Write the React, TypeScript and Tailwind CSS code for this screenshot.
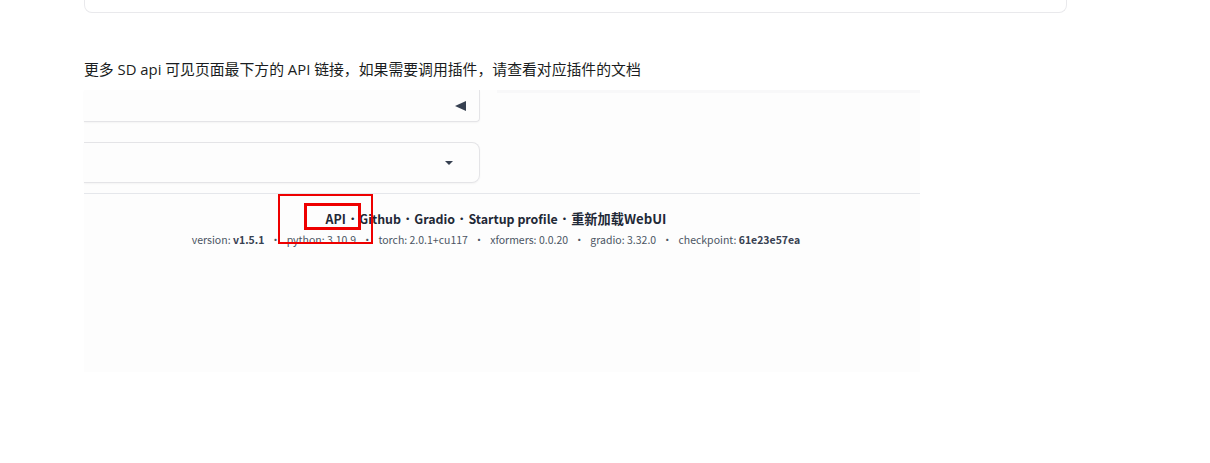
export default function App() {
  const links = ["API", "Github", "Gradio", "Startup profile"];

  return (
    <div className="relative h-[463px] w-[1210px] overflow-hidden bg-white pl-[84px]">
      {/* Top card */}
      <div className="h-[13px] w-[983px] rounded-b-lg border-x border-b border-[#e9e9ec]" />

      <p className="mt-[46px] h-[21px] text-[14.85px] leading-[21px] text-[#1a1d21] [font-family:'Open_Sans','Noto_Sans_CJK_SC',sans-serif]">
        更多 SD api 可见页面最下方的 API 链接，如果需要调用插件，请查看对应插件的文档
      </p>

      {/* Embedded screenshot */}
      <div className="mt-[10px] h-[282px] w-[836px] bg-[#fdfdfd] [font-family:'Noto_Sans_CJK_SC',sans-serif]">
        <div className="flex items-start">
          <div className="flex h-[32px] w-[396px] items-center justify-end rounded-br-sm border-r border-b border-[#e4e4e7] pr-[13px] shadow-[0_1px_2px_rgba(0,0,0,0.04)]">
            <span className="h-0 w-0 border-y-[5px] border-r-[11px] border-y-transparent border-r-[#374151]" />
          </div>
          <div className="ml-[17px] h-[3px] flex-1 bg-[#f8f8f9]" />
        </div>

        <div className="mt-[20px] flex h-[41px] w-[396px] items-center justify-end rounded-r-lg border-y border-r border-[#e4e4e7] pr-[26px] shadow-[0_1px_2px_rgba(0,0,0,0.04)]">
          <span className="h-0 w-0 border-x-[4px] border-t-[4px] border-x-transparent border-t-[#374151]" />
        </div>

        <div className="mt-[10px] border-t border-[#e5e7eb] pt-[16px] pr-[12px] text-center">
          <div className="flex items-center justify-center text-[12.4px] leading-[18px] font-semibold text-[#1f2937]">
            {links.map((link, i) => (
              <span key={link}>
                {i > 0 && <span className="mx-[0.5px] font-normal">·</span>}
                {link}
              </span>
            ))}
            <span>
              <span className="mx-[0.5px] font-normal">·</span>
              <span className="text-[13.2px]">重新加载WebUI</span>
            </span>
          </div>
          <div className="mt-[4px] flex items-center justify-center gap-[4.5px] text-[10.5px] leading-[16px] text-[#4b5563]">
            <span>
              version: <b className="font-semibold text-[#374151]">v1.5.1</b>
            </span>
            <span className="mx-[1.4px]">•</span>
            <span>python: 3.10.9</span>
            <span className="mx-[1.4px]">•</span>
            <span>torch: 2.0.1+cu117</span>
            <span className="mx-[1.4px]">•</span>
            <span>xformers: 0.0.20</span>
            <span className="mx-[1.4px]">•</span>
            <span>gradio: 3.32.0</span>
            <span className="mx-[1.4px]">•</span>
            <span>
              checkpoint: <b className="font-semibold text-[#374151]">61e23e57ea</b>
            </span>
          </div>
        </div>
      </div>

      {/* Red annotation boxes */}
      <div className="absolute top-[194px] left-[278px] h-[50px] w-[95px] border-2 border-[#ee0000]" />
      <div className="absolute top-[203px] left-[304px] h-[27px] w-[57px] border-[3px] border-[#ee0000]" />
    </div>
  );
}
